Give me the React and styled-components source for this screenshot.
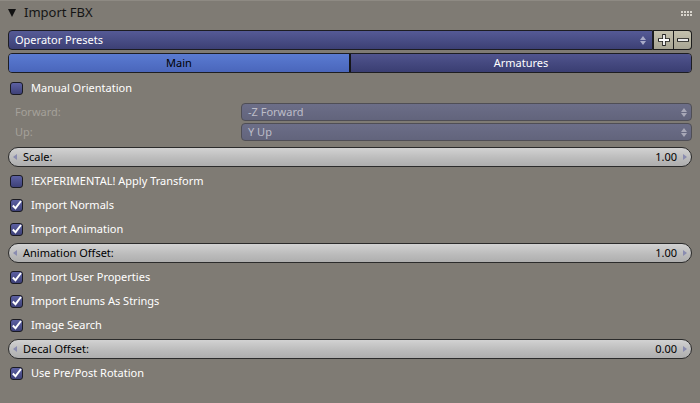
import styled, { createGlobalStyle } from 'styled-components';

const Global = createGlobalStyle`
    html, body {
        margin: 0;
        padding: 0;
        background: #7f7b74;
    }
    body {
        font-family: "Noto Sans", "Open Sans", "DejaVu Sans", sans-serif;
        font-size: 11px;
        color: #fff;
    }
`;

const Panel = styled.div`
    width: 700px;
    height: 403px;
    box-sizing: border-box;
    border-top: 1px solid #8e8a83;
    background: #7f7b74;
`;

const Header = styled.div`
    height: 23px;
    display: flex;
    align-items: center;
    padding: 0 8px;
    font-size: 13px;
    color: #151515;
`;

const Triangle = styled.span`
    width: 0;
    height: 0;
    border-left: 4px solid transparent;
    border-right: 4px solid transparent;
    border-top: 8px solid #111;
    margin-right: 8px;
    margin-top: 1px;
`;

const Grip = styled.div`
    margin-left: auto;
    display: grid;
    grid-template-columns: repeat(4, 2px);
    gap: 1px;
    margin-top: 1px;
    span {
        width: 2px;
        height: 2px;
        background: #d8d4cc;
    }
`;

const Text = styled.span`
    margin-bottom: 2px;
`;

const Body = styled.div`
    padding: 6px 8px 0 8px;
    display: flex;
    flex-direction: column;
`;

const PresetRow = styled.div`
    display: flex;
    height: 20px;
`;

const PresetMenu = styled.div`
    flex: 1;
    display: flex;
    align-items: center;
    padding: 0 6px;
    border: 1px solid #1d1d22;
    border-radius: 4px 0 0 4px;
    background: linear-gradient(#555a96, #3c4074);
    color: #fff;
`;

const Updown = styled.span`
    margin-left: auto;
    display: flex;
    flex-direction: column;
    gap: 1px;
    i {
        width: 0;
        height: 0;
        border-left: 3px solid transparent;
        border-right: 3px solid transparent;
    }
    i:first-child {
        border-bottom: 4px solid ${p => p.$c};
    }
    i:last-child {
        border-top: 4px solid ${p => p.$c};
    }
`;

const IconButton = styled.div`
    width: ${p => (p.$last ? '17px' : '19px')};
    display: flex;
    align-items: center;
    justify-content: center;
    border: 1px solid #1d1d1d;
    border-left: ${p => (p.$last ? 'none' : '1px solid #1d1d1d')};
    border-radius: ${p => (p.$last ? '0 4px 4px 0' : '0')};
    background: linear-gradient(#c4c1ae, #a7a493);
`;

const Tabs = styled.div`
    display: flex;
    height: 20px;
    margin-top: 3px;
    border: 1px solid #1d1d22;
    border-radius: 4px;
    overflow: hidden;
    box-sizing: border-box;
`;

const Tab = styled.div`
    flex: 1;
    display: flex;
    align-items: center;
    justify-content: center;
    color: ${p => (p.$active ? '#000' : '#fff')};
    background: ${p =>
        p.$active
            ? 'linear-gradient(#5a7bd2, #4a66bb)'
            : 'linear-gradient(#50548e, #3a3e72)'};
    & + & {
        border-left: 2px solid #151518;
    }
`;

const Rows = styled.div`
    display: flex;
    flex-direction: column;
    gap: 4px;
    margin-top: 5px;
`;

const CheckRow = styled.div`
    height: 20px;
    display: flex;
    align-items: center;
    padding-left: 2px;
    gap: 8px;
`;

const Box = styled.span`
    width: 11px;
    height: 11px;
    border: 1px solid #1a1a22;
    border-radius: 3px;
    background: linear-gradient(#5c60a2, #3e4178);
    display: flex;
    align-items: center;
    justify-content: center;
`;

const OrientGroup = styled.div`
    display: flex;
    flex-direction: column;
    margin-bottom: 1px;
`;

const EnumRow = styled.div`
    height: 20px;
    display: grid;
    grid-template-columns: 233px 1fr;
    align-items: center;
`;

const DimLabel = styled.span`
    padding-left: 7px;
    margin-bottom: 2px;
    color: #a5a19a;
`;

const EnumBox = styled.div`
    height: 18px;
    box-sizing: border-box;
    display: flex;
    align-items: center;
    padding: 0 4px 0 6px;
    border: 1px solid #4f4e55;
    border-radius: 4px;
    background: linear-gradient(#6c6e88, #62647c);
    color: #bdbdc8;
`;

const Slider = styled.div`
    height: 20px;
    box-sizing: border-box;
    display: flex;
    align-items: center;
    padding: 0 4px;
    border: 1px solid #2b2b2b;
    border-radius: 10px;
    background: linear-gradient(#d2d2d2, #bcbcbc 55%, #aeaeae);
    color: #000;
`;

const Arrow = styled.span`
    width: 0;
    height: 0;
    border-top: 3px solid transparent;
    border-bottom: 3px solid transparent;
    ${p =>
        p.$right
            ? 'border-left: 4px solid #8a8cb0; margin-left: 6px;'
            : 'border-right: 4px solid #8a8cb0; margin-right: 6px;'}
`;

const Value = styled(Text)`
    margin-left: auto;
`;

function Check({ on }) {
    return (
        <Box>
            {on && (
                <svg width="11" height="11" viewBox="0 0 11 11">
                    <path d="M1.8 5.5 L4.5 8.2 L10 1" fill="none" stroke="#fff" strokeWidth="1.9" />
                </svg>
            )}
        </Box>
    );
}

function CheckItem({ on, children }) {
    return (
        <CheckRow>
            <Check on={on} />
            <Text>{children}</Text>
        </CheckRow>
    );
}

function NumSlider({ label, value }) {
    return (
        <Slider>
            <Arrow />
            <Text>{label}</Text>
            <Value>{value}</Value>
            <Arrow $right />
        </Slider>
    );
}

export default function App() {
    return (
        <Panel>
            <Global />
            <Header>
                <Triangle />
                <Text>Import FBX</Text>
                <Grip>
                    {Array.from({ length: 8 }).map((_, i) => <span key={i} />)}
                </Grip>
            </Header>
            <Body>
                <PresetRow>
                    <PresetMenu>
                        <Text>Operator Presets</Text>
                        <Updown $c="#a9abc8"><i /><i /></Updown>
                    </PresetMenu>
                    <IconButton>
                        <svg width="14" height="14" viewBox="0 0 14 14">
                            <path d="M7 1 V13 M1 7 H13" stroke="#222" strokeWidth="3.6" />
                            <path d="M7 2 V12 M2 7 H12" stroke="#fff" strokeWidth="1.8" />
                        </svg>
                    </IconButton>
                    <IconButton $last>
                        <svg width="14" height="14" viewBox="0 0 14 14">
                            <path d="M1 7 H13" stroke="#222" strokeWidth="3.6" />
                            <path d="M2 7 H12" stroke="#fff" strokeWidth="1.8" />
                        </svg>
                    </IconButton>
                </PresetRow>
                <Tabs>
                    <Tab $active><Text>Main</Text></Tab>
                    <Tab><Text>Armatures</Text></Tab>
                </Tabs>
                <Rows>
                    <CheckItem>Manual Orientation</CheckItem>
                    <OrientGroup>
                        <EnumRow>
                            <DimLabel>Forward:</DimLabel>
                            <EnumBox>
                                <Text>-Z Forward</Text>
                                <Updown $c="#a8a8b8"><i /><i /></Updown>
                            </EnumBox>
                        </EnumRow>
                        <EnumRow>
                            <DimLabel>Up:</DimLabel>
                            <EnumBox>
                                <Text>Y Up</Text>
                                <Updown $c="#a8a8b8"><i /><i /></Updown>
                            </EnumBox>
                        </EnumRow>
                    </OrientGroup>
                    <NumSlider label="Scale:" value="1.00" />
                    <CheckItem>!EXPERIMENTAL! Apply Transform</CheckItem>
                    <CheckItem on>Import Normals</CheckItem>
                    <CheckItem on>Import Animation</CheckItem>
                    <NumSlider label="Animation Offset:" value="1.00" />
                    <CheckItem on>Import User Properties</CheckItem>
                    <CheckItem on>Import Enums As Strings</CheckItem>
                    <CheckItem on>Image Search</CheckItem>
                    <NumSlider label="Decal Offset:" value="0.00" />
                    <CheckItem on>Use Pre/Post Rotation</CheckItem>
                </Rows>
            </Body>
        </Panel>
    );
}
